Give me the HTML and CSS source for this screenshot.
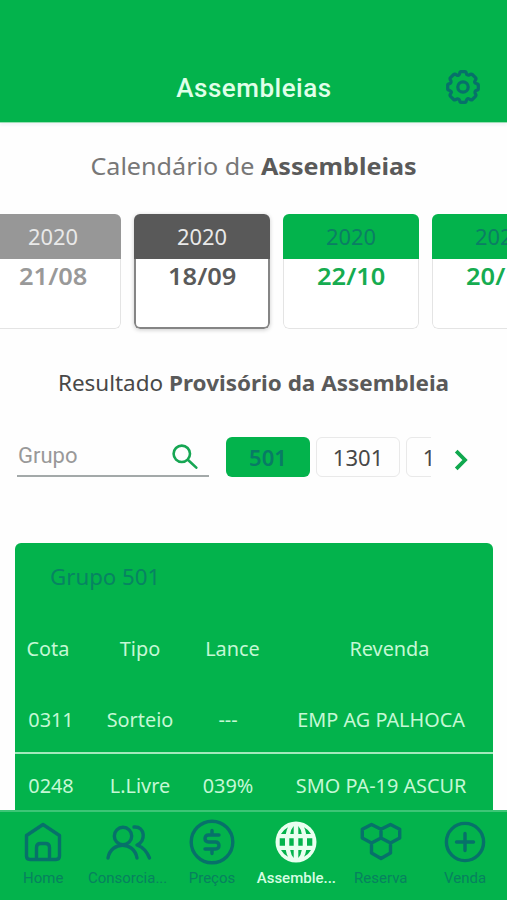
FILE: index.html
```html
<!DOCTYPE html>
<html lang="pt-BR">
<head>
<meta charset="utf-8">
<meta name="viewport" content="width=device-width, initial-scale=1">
<title>Assembleias</title>
<link rel="stylesheet" href="styles.css">
</head>
<body>
<div class="app">
  <header class="topbar">
    <h1 class="topbar-title">Assembleias</h1>
    <svg class="gear" viewBox="-18 -18 36 36"><path d="M-2-15.3H2Q3-15.3 3.4-13.4T6.3-12.1Q8.2-13.6 9.3-12.5L12.5-9.3Q13.6-8.2 12.1-6.3T13.4-3.4Q15.3-3 15.3-2V2Q15.3 3 13.4 3.4T12.1 6.3Q13.6 8.2 12.5 9.3L9.3 12.5Q8.2 13.6 6.3 12.1T3.4 13.4Q3 15.3 2 15.3H-2Q-3 15.3-3.4 13.4T-6.3 12.1Q-8.2 13.6-9.3 12.5L-12.5 9.3Q-13.6 8.2-12.1 6.3T-13.4 3.4Q-15.3 3-15.3 2V-2Q-15.3-3-13.4-3.4T-12.1-6.3Q-13.6-8.2-12.5-9.3L-9.3-12.5Q-8.2-13.6-6.3-12.1T-3.4-13.4Q-3-15.3-2-15.3Z"/><circle r="5.2"/></svg>
  </header>
  <main class="content">
    <h2 class="heading">Calendário de <b>Assembleias</b></h2>
    <div class="calendar">
      <article class="date past"><div class="year"><span>2020</span></div><div class="day"><span>21/08</span></div></article>
      <article class="date current"><div class="year"><span>2020</span></div><div class="day"><span>18/09</span></div></article>
      <article class="date"><div class="year"><span>2020</span></div><div class="day"><span>22/10</span></div></article>
      <article class="date"><div class="year"><span>2020</span></div><div class="day"><span>20/11</span></div></article>
    </div>
    <h3 class="subheading">Resultado <b>Provisório da Assembleia</b></h3>
    <div class="filters">
      <div class="search">
        <span>Grupo</span>
        <svg class="search-icon" viewBox="0 0 26 26"><circle cx="9.8" cy="9.8" r="8.2"/><path d="M15.8 15.8 24.3 23.6"/></svg>
      </div>
      <div class="chips">
        <div class="chip selected"><span>501</span></div>
        <div class="chip"><span>1301</span></div>
        <div class="chip"><span>1302</span></div>
      </div>
      <svg class="next" viewBox="0 0 14 22"><path d="M2.2 2.2 11 11 2.2 19.8"/></svg>
    </div>
    <section class="group">
      <h4 class="group-name">Grupo 501</h4>
      <div class="row head"><span>Cota</span><span>Tipo</span><span>Lance</span><span>Revenda</span></div>
      <div class="row"><span>0311</span><span>Sorteio</span><span>---</span><span class="dealer">EMP AG PALHOCA</span></div>
      <div class="row"><span>0248</span><span>L.Livre</span><span>039%</span><span class="dealer">SMO PA-19 ASCUR</span></div>
    </section>
  </main>
  <nav class="tabs">
    <a class="tab"><svg viewBox="-24 -24 48 48"><path d="M-16.5-6.5 0-17.5 16.5-6.5V14Q16.5 17.5 13 17.5H-13Q-16.5 17.5-16.5 14ZM-6.5 17.5V5.5Q-6.5 1.5-2.5 1.5H2.5Q6.5 1.5 6.5 5.5V17.5"/></svg><span>Home</span></a>
    <a class="tab"><svg viewBox="-24 -24 48 48"><circle cx="-5" cy="-6" r="8.7"/><path d="M-20 16C-17-1 6-1 9 16M6-15C17.5-16 18 0 9 3Q17.5 6 21.5 16"/></svg><span>Consorcia...</span></a>
    <a class="tab"><svg viewBox="-24 -24 48 48"><circle r="20.8"/><path d="M7-7H-3.5Q-7-7-7-3.5T-3.5 0H3.5Q7 0 7 3.5T3.5 7H-7M0-7V-11.5M0 7V11.5"/></svg><span>Preços</span></a>
    <a class="tab active"><svg viewBox="-24 -24 48 48"><circle class="globe" r="20.5"/><path class="windows" d="M-6.7-3.8H-2.3V3.8H-6.7ZM2.3-3.8H6.7V3.8H2.3ZM-16.3-3.8H-11V3.8H-16.3ZM11-3.8H16.3V3.8H11ZM-5.8-8H-2.3V-16Q-5-13-5.8-8ZM5.8-8H2.3V-16Q5-13 5.8-8ZM-5.8 8H-2.3V16Q-5 13-5.8 8ZM5.8 8H2.3V16Q5 13 5.8 8ZM-15-8H-10.2Q-9.6-12-8-14.8-12.5-12.5-15-8ZM15-8H10.2Q9.6-12 8-14.8 12.5-12.5 15-8ZM-15 8H-10.2Q-9.6 12-8 14.8-12.5 12.5-15 8ZM15 8H10.2Q9.6 12 8 14.8 12.5 12.5 15 8Z"/></svg><span>Assemble...</span></a>
    <a class="tab"><svg viewBox="-24 -24 48 48"><path d="M-9.5-17.5 0-12.7V-4L-9.5 1-18.7-4V-12.7ZM9.5-17.5 18.7-12.7V-4L9.5 1 0-4V-12.7ZM0-4 9.5 1V11L0 16.5-9.5 11V1Z"/></svg><span>Reserva</span></a>
    <a class="tab"><svg viewBox="-24 -24 48 48"><circle r="18.6"/><path d="M-8.5 0H8.5M0-8.5V8.5"/></svg><span>Venda</span></a>
  </nav>
</div>
</body>
</html>
```
FILE: styles.css
```css
* { box-sizing: border-box; margin: 0; padding: 0; }
:root { --green: #03b34c; --teal: #07716a; --gray: #5a5a5a; --pale: #c5f8d5; }
body { width: 507px; height: 900px; overflow: hidden; background: #fefefe; font-family: "Noto Sans", "Open Sans", sans-serif; }
.app { height: 900px; display: flex; flex-direction: column; }
svg { fill: none; stroke: var(--teal); stroke-width: 3.4; stroke-linecap: round; stroke-linejoin: round; display: block; flex: none; }

.topbar { flex: none; height: 122px; padding: 53px 26px 0 63px; display: grid; grid-template-columns: 1fr 36px; align-items: center; background: var(--green); box-shadow: 0 1px 0 #9bdfb5, 0 3px 3px #f0f2f7; }
.topbar-title { text-align: center; font: 500 26px/36px Roboto, sans-serif; color: #e0ffe9; letter-spacing: 0.5px; }
.gear { width: 36px; height: 36px; stroke-width: 3.2; margin-top: -1px; }

.content { flex: 1; min-height: 0; overflow: hidden; display: flex; flex-direction: column; }
.heading { margin-top: 26px; height: 36px; text-align: center; font-size: 24px; font-weight: 400; line-height: 36px; color: #777; white-space: nowrap; transform: scaleX(1.047); }
.heading b, .subheading b { color: var(--gray); font-weight: 700; }

.calendar { flex: none; margin: 30px 0 0 -15px; display: flex; gap: 13px; }
.date { flex: none; width: 136px; height: 115px; overflow: hidden; border-radius: 6px; text-align: center; color: #16ac50; background: #fff; }
.date span { display: inline-block; }
.year { height: 45px; font-size: 21px; line-height: 47px; color: #0b7e64; background: var(--green); }
.year span { transform: scaleX(1.04); }
.day { height: 70px; font-size: 24px; line-height: 34px; font-weight: 600; border: 1.5px solid #e4e4e4; border-top: 0; border-radius: 0 0 6px 6px; }
.day span { transform: scaleX(1.06); }
.past { color: #999; }
.past .year { background: #979797; color: #e9e9e9; }
.current { color: var(--gray); box-shadow: 0 1px 4px #ccc; }
.current .year { background: #595959; color: #e9e9e9; }
.current .day { border: 2px solid #858585; border-top: 0; }

.subheading { margin-top: 38px; height: 32px; text-align: center; font-size: 21px; font-weight: 400; line-height: 32px; color: #484848; white-space: nowrap; transform: scaleX(1.07); }

.filters { flex: none; margin: 37px 0 0 17px; height: 42px; display: flex; }
.search { width: 192px; height: 41px; padding: 0 11px 0 1px; border-bottom: 2px solid #a3a9a9; display: flex; align-items: center; justify-content: space-between; font: 400 22px/40px Roboto, sans-serif; color: #999; }
.search-icon { width: 26px; height: 26px; margin-top: 2px; stroke: #16a653; stroke-width: 2.6; }
.chips { width: 205px; margin-left: 17px; display: flex; gap: 6px; overflow: hidden; padding: 1px 0; }
.chip { flex: none; width: 84px; height: 40px; border: 1px solid #e9e9e9; border-radius: 6px; text-align: center; font-size: 21px; line-height: 41px; color: #484848; }
.chip span { display: inline-block; transform: scaleX(1.05); }
.chip.selected { border: 0; background: var(--green); color: #087b65; font-weight: 600; line-height: 43px; }
.next { width: 14px; height: 22px; margin: 13px 0 0 23px; stroke: #10a84e; stroke-width: 3.8; stroke-linecap: butt; stroke-linejoin: miter; }

.group { flex: none; width: 478px; height: 300px; margin: 65px 0 0 15px; padding-top: 16px; border-radius: 6px 6px 0 0; background: var(--green); color: var(--pale); }
.group-name { padding-left: 33px; height: 36px; font-size: 21px; line-height: 36px; font-weight: 400; color: #078362; transform: scaleX(1.06); transform-origin: 0 50%; }
.row { display: grid; grid-template-columns: 72px 106px 70px 1fr; height: 66px; border-top: 2px solid #a4e9bc; text-align: center; font-size: 19px; line-height: 65px; white-space: nowrap; }
.row span { transform: scaleX(1.045); }
.row.head { height: 88px; border: 0; grid-template-columns: 66px 118px 67px 1fr; line-height: 108px; }
.row.head span:last-child { padding-left: 19px; }
.row.head + .row { height: 69px; border: 0; line-height: 75px; }
.dealer { padding-left: 6px; }

.tabs { flex: none; height: 90px; padding-left: 1px; display: grid; grid-template-columns: repeat(6, 84.4px); background: var(--green); border-top: 2px solid #3dc676; }
.tab { display: flex; flex-direction: column; align-items: center; padding-top: 6px; color: #07815f; font: 400 15px/24px Roboto, sans-serif; white-space: nowrap; }
.tab svg { width: 48px; height: 48px; }
.tab.active { color: #d6fde2; font-weight: 500; }
.globe { fill: #e9fff0; stroke: none; }
.windows { fill: var(--green); stroke: none; }
```
